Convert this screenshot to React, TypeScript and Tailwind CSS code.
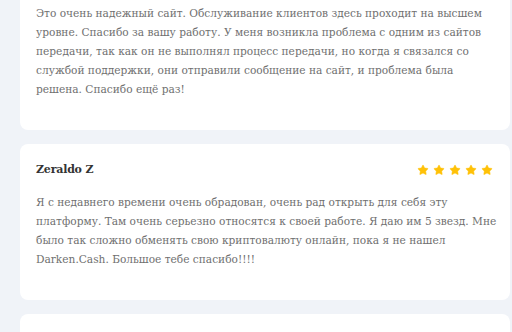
import { Star } from 'lucide-react';

const reviews = [
  {
    name: 'Danil K',
    text: 'Это очень надежный сайт. Обслуживание клиентов здесь проходит на высшем уровне. Спасибо за вашу работу. У меня возникла проблема с одним из сайтов передачи, так как он не выполнял процесс передачи, но когда я связался со службой поддержки, они отправили сообщение на сайт, и проблема была решена. Спасибо ещё раз!',
  },
  {
    name: 'Zeraldo Z',
    text: 'Я с недавнего времени очень обрадован, очень рад открыть для себя эту платформу. Там очень серьезно относятся к своей работе. Я даю им 5 звезд. Мне было так сложно обменять свою криптовалюту онлайн, пока я не нашел Darken.Cash. Большое тебе спасибо!!!!',
  },
  {
    name: 'Marina S',
    text: 'Быстрый обмен и вежливая поддержка. Рекомендую.',
  },
];

export default function App() {
  return (
    <div className="h-[332px] overflow-hidden bg-[#f0f3f8] pl-5 pr-[2px]" style={{ fontFamily: '"DejaVu Serif", serif' }}>
      <div className="mt-[-45px] flex flex-col gap-[14px]">
        {reviews.map((r) => (
          <div key={r.name} className="rounded-lg bg-white px-4 pt-[18px] pb-[31px]">
            <div className="flex h-4 items-center justify-between pr-px">
              <h4 className="text-[11px] font-bold tracking-[-0.2px] text-[#333333]">{r.name}</h4>
              <div className="flex gap-1">
                {[0, 1, 2, 3, 4].map((i) => (
                  <Star key={i} className="h-3 w-3 fill-[#ffc107] text-[#ffc107]" strokeWidth={1} />
                ))}
              </div>
            </div>
            <p className="-mr-1 mt-[15px] text-[10.6px] leading-[19px] text-[#707070]">{r.text}</p>
          </div>
        ))}
      </div>
    </div>
  );
}
